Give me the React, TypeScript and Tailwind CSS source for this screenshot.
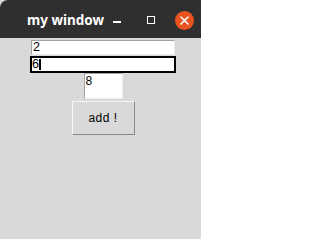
import React from 'react';

const TitleBar = () => (
  <div className="h-[38px] shrink-0 bg-[#2f2f2f] rounded-tl-[8px] flex items-center">
    <span className="w-[76px] ml-[27px] text-white font-bold text-[13.5px] leading-none font-['Noto_Sans',sans-serif] mt-[3px] whitespace-nowrap">
      my window
    </span>
    <span className="ml-[10px] mt-[6px] w-[8px] h-[1.5px] bg-white" />
    <span className="ml-[26px] mt-[1px] w-[8px] h-[8px] border-[1.5px] border-white" />
    <span className="ml-[20px] mt-[2px] w-[19px] h-[19px] rounded-full bg-[#e95420] flex items-center justify-center">
      <svg width="9" height="9" viewBox="0 0 9 9">
        <path d="M1 1 L8 8 M8 1 L1 8" stroke="white" strokeWidth="1.6" strokeLinecap="round" />
      </svg>
    </span>
  </div>
);

export default function App() {
  return (
    <div className="w-[201px] h-[239px] bg-[#d9d9d9] flex flex-col font-['Liberation_Sans',Arial,sans-serif] text-black">
      <TitleBar />
      <div className="flex flex-col items-center pl-[5px] pt-[1px]">
        <div className="p-[1px]">
          <div className="w-[144px] h-[15px] bg-white border border-t-[#a3a3a3] border-l-[#a3a3a3] border-b-[#ececec] border-r-[#ececec] text-[12.5px] leading-[13px] pl-[1px]">
            2
          </div>
        </div>
        <div className="w-[146px] h-[17px] bg-white border-2 border-black text-[12.5px] leading-[13px] flex items-start">
          <span>6</span>
          <span className="inline-block w-[2px] h-[11px] bg-black mt-[1px]" />
        </div>
        <div className="w-[39px] h-[26px] bg-white border border-t-[#a3a3a3] border-l-[#a3a3a3] border-b-[#ececec] border-r-[#ececec] text-[12px] leading-[13px] pl-[1px] pt-[1px]">
          8
        </div>
        <button className="mt-[2px] w-[63px] h-[34px] bg-[#d9d9d9] border border-t-[#f5f5f5] border-l-[#f5f5f5] border-b-[#8a8a8a] border-r-[#8a8a8a] text-[12px] leading-none text-black tracking-[0.5px]">
          add !
        </button>
      </div>
    </div>
  );
}
